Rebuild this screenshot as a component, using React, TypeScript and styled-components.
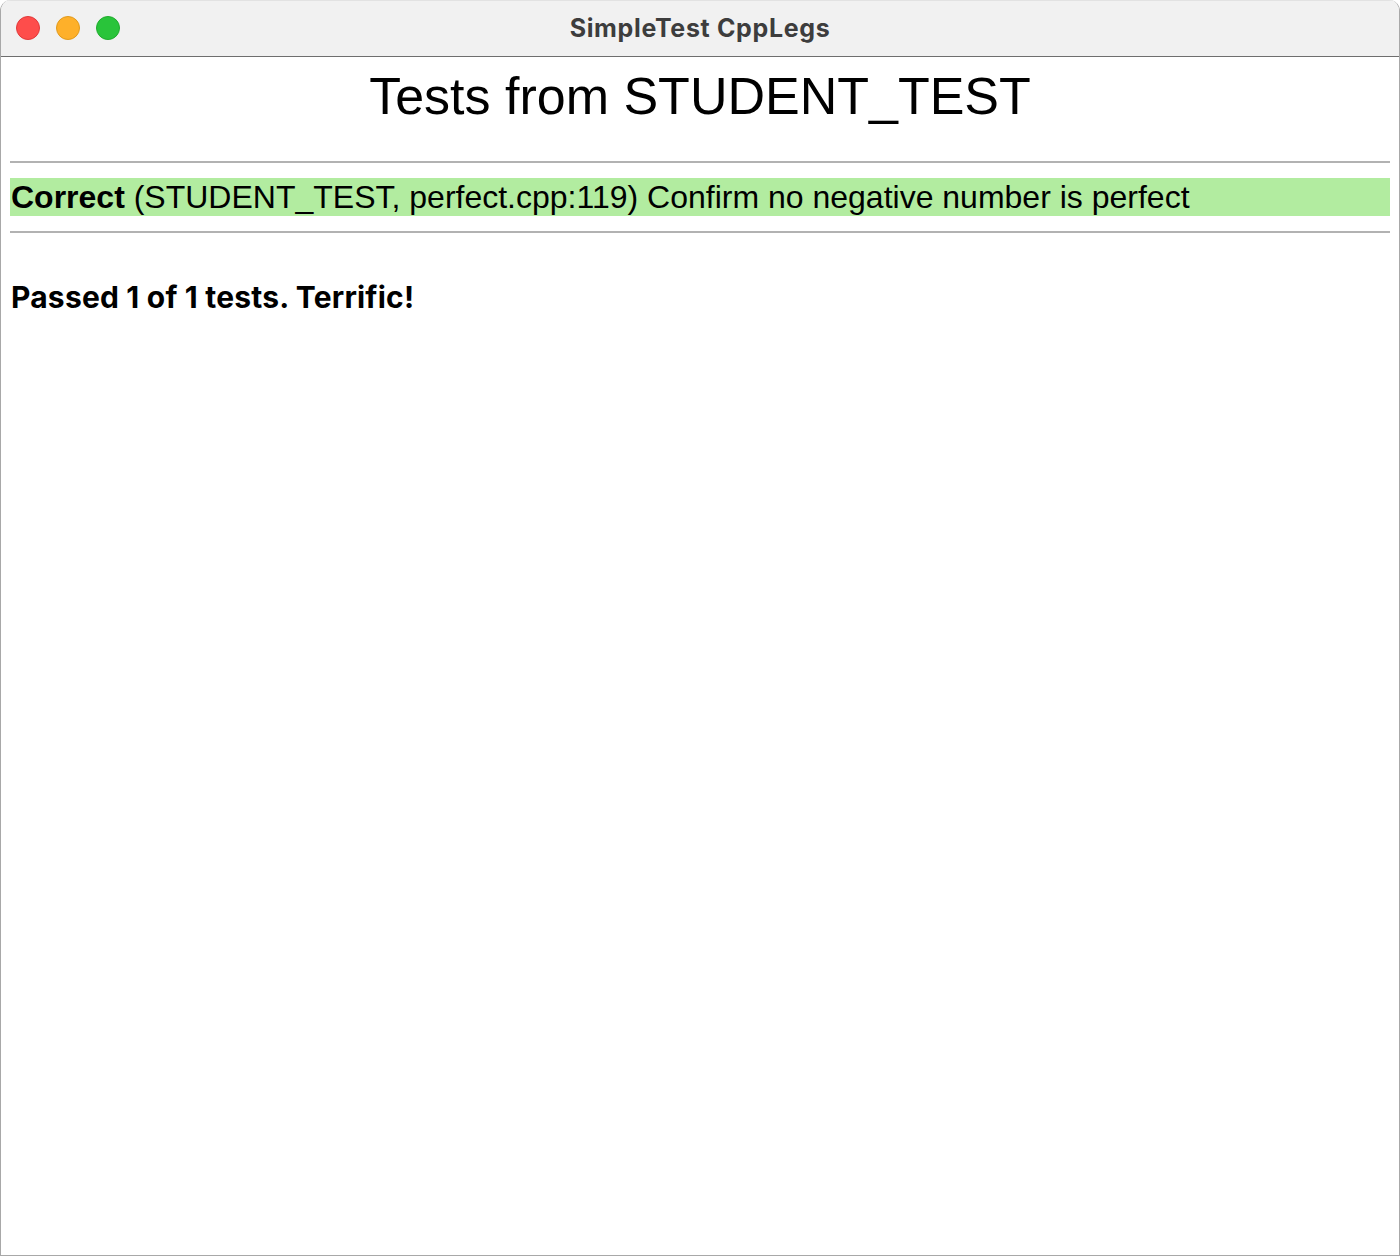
import React from "react";
import styled, { createGlobalStyle } from "styled-components";

const Global = createGlobalStyle`
  html, body { margin: 0; padding: 0; background: #ffffff; }
  body { width: 1400px; height: 1256px; overflow: hidden; }
`;

const Window = styled.div`
  box-sizing: border-box;
  width: 1400px;
  height: 1256px;
  display: flex;
  flex-direction: column;
  border: 1px solid #a8a8a8;
  border-top: none;
  border-radius: 11px 11px 0 0;
  overflow: hidden;
  background: #ffffff;
`;

const TitleBar = styled.div`
  position: relative;
  height: 57px;
  flex: 0 0 57px;
  box-sizing: border-box;
  background: #f1f1f1;
  border-bottom: 1px solid #6e6e6e;
  border-top: 1px solid #e2e2e2;
  display: flex;
  align-items: center;
  justify-content: center;
`;

const Lights = styled.div`
  position: absolute;
  left: 15px;
  top: 15px;
  display: flex;
  gap: 16px;
`;

const Light = styled.span<{ $fill: string; $edge: string }>`
  width: 24px;
  height: 24px;
  border-radius: 50%;
  box-sizing: border-box;
  background: ${(p) => p.$fill};
  border: 1px solid ${(p) => p.$edge};
`;

const Title = styled.div`
  font-family: Inter, "Noto Sans", sans-serif;
  font-weight: 700;
  font-size: 25px;
  color: #3d3d3d;
  letter-spacing: 0.65px;
  margin-top: -2px;
`;

const Content = styled.div`
  flex: 1;
  padding: 0 9px;
  display: flex;
  flex-direction: column;
`;

const Heading = styled.h1`
  margin: 9px 0 0;
  text-align: center;
  font-family: "Liberation Sans", Arial, sans-serif;
  font-weight: 400;
  font-size: 52px;
  line-height: 60px;
  color: #000;
`;

const Rule = styled.div<{ $top: number }>`
  height: 2px;
  background: #b2b2b2;
  margin-top: ${(p) => p.$top}px;
`;

const ResultRow = styled.div`
  margin-top: 15px;
  height: 38px;
  background: #b2eca0;
  display: flex;
  align-items: center;
  font-family: "Liberation Sans", Arial, sans-serif;
  font-size: 32px;
  color: #000;
  white-space: nowrap;
  padding-left: 1px;
`;

const Strong = styled.b`
  font-weight: 700;
`;

const Summary = styled.div`
  margin-top: 46px;
  padding-left: 1px;
  font-family: Inter, "Noto Sans", sans-serif;
  font-weight: 700;
  font-size: 30px;
  line-height: 36px;
  letter-spacing: 0.2px;
  color: #000;
`;

export default function App() {
  return (
    <>
      <Global />
      <Window>
        <TitleBar>
          <Lights>
            <Light $fill="#fe4d4b" $edge="#e1393a" />
            <Light $fill="#feb02a" $edge="#e19a1c" />
            <Light $fill="#29c43a" $edge="#1fac2d" />
          </Lights>
          <Title>SimpleTest CppLegs</Title>
        </TitleBar>
        <Content>
          <Heading>Tests from STUDENT_TEST</Heading>
          <Rule $top={35} />
          <ResultRow>
            <Strong>Correct</Strong>&nbsp;(STUDENT_TEST, perfect.cpp:119) Confirm no negative number is perfect
          </ResultRow>
          <Rule $top={15} />
          <Summary>Passed 1 of 1 tests. Terrific!</Summary>
        </Content>
      </Window>
    </>
  );
}
